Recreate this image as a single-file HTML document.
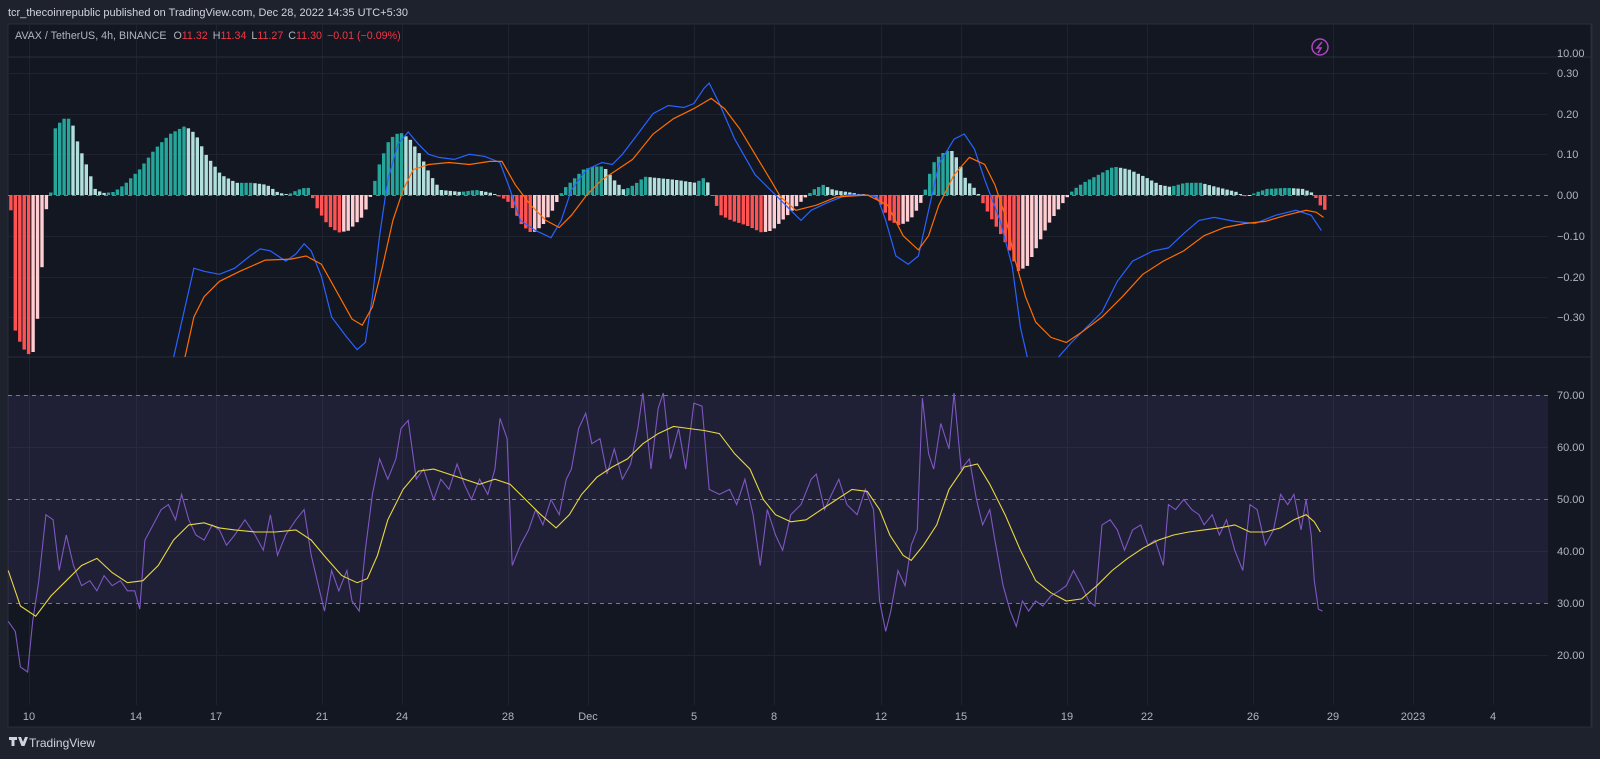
<!DOCTYPE html>
<html><head><meta charset="utf-8">
<style>
html,body{margin:0;padding:0;background:#1e222d;width:1600px;height:759px;overflow:hidden;font-family:"Liberation Sans",sans-serif;}
</style></head>
<body>
<svg id="s" width="1600" height="759" xmlns="http://www.w3.org/2000/svg" style="position:absolute;left:0;top:0">
<rect x="0" y="0" width="1600" height="759" fill="#1e222d"/>
<rect x="8" y="24" width="1584" height="703" fill="#131722" stroke="#2a2e39"/>
<text x="8" y="16" fill="#d1d4dc" font-size="11">tcr_thecoinrepublic published on TradingView.com, Dec 28, 2022 14:35 UTC+5:30</text>
<g id="grid" stroke="#1f2330" stroke-width="1"></g>
<line x1="8" y1="57" x2="1591" y2="57" stroke="#2a2e39"/>
<line x1="8" y1="357" x2="1591" y2="357" stroke="#2a2e39"/>
<line x1="1591" y1="24" x2="1591" y2="727" stroke="#2a2e39"/>
<rect x="8" y="395" width="1540" height="208" fill="#7e57c2" fill-opacity="0.12"/>
<g stroke="#787b86" stroke-dasharray="4,4" stroke-width="1">
<line x1="8" y1="195.5" x2="1548" y2="195.5"/>
<line x1="8" y1="395.5" x2="1548" y2="395.5"/>
<line x1="8" y1="499.5" x2="1548" y2="499.5"/>
<line x1="8" y1="603.5" x2="1548" y2="603.5"/>
</g>
<defs><clipPath id="cm"><rect x="8" y="58" width="1540" height="299"/></clipPath></defs>
<g id="hist" clip-path="url(#cm)"></g>
<g clip-path="url(#cm)">
<polyline id="blue" fill="none" stroke="#2962ff" stroke-width="1.2"/>
<polyline id="orange" fill="none" stroke="#ff6d00" stroke-width="1.2"/>
</g>
<polyline id="rsi" fill="none" stroke="#7e57c2" stroke-width="1.1"/>
<polyline id="rma" fill="none" stroke="#e8d844" stroke-width="1.1"/>
<g font-size="11" fill="#b2b5be" id="axis">
<text x="1557" y="57">10.00</text>
<text x="1557" y="77">0.30</text>
<text x="1557" y="118">0.20</text>
<text x="1557" y="158">0.10</text>
<text x="1557" y="199">0.00</text>
<text x="1557" y="240">−0.10</text>
<text x="1557" y="281">−0.20</text>
<text x="1557" y="321">−0.30</text>
<text x="1557" y="399">70.00</text>
<text x="1557" y="451">60.00</text>
<text x="1557" y="503">50.00</text>
<text x="1557" y="555">40.00</text>
<text x="1557" y="607">30.00</text>
<text x="1557" y="659">20.00</text>
</g>
<g font-size="11" fill="#b2b5be" text-anchor="middle" id="dates"></g>
<text x="15" y="39" font-size="10.7" fill="#b2b5be">AVAX / TetherUS, 4h, BINANCE <tspan dx="4">O</tspan><tspan fill="#f23645">11.32</tspan><tspan dx="5">H</tspan><tspan fill="#f23645">11.34</tspan><tspan dx="5">L</tspan><tspan fill="#f23645">11.27</tspan><tspan dx="5">C</tspan><tspan fill="#f23645">11.30</tspan><tspan dx="5" fill="#f23645">−0.01 (−0.09%)</tspan></text>
<circle cx="1320" cy="47" r="8" fill="none" stroke="#ab47bc" stroke-width="1.5"/>
<path d="M1322 42 L1317 48 L1321 48 L1318 53" fill="none" stroke="#ab47bc" stroke-width="1.5"/>
<g fill="#d1d4dc"><path d="M9 737 h8 v3 h-2.5 v6 h-3 v-6 h-2.5z M18 737 h3 l2 5 l2 -5 h3 l-3.5 9 h-3z"/></g>
<text x="29" y="747" font-size="12" fill="#d1d4dc">TradingView</text>
</svg>
<script>
var NS="http://www.w3.org/2000/svg",s=document.getElementById('s');
var K=1.0204;
function el(p,t,a){var e=document.createElementNS(NS,t);for(var k in a)e.setAttribute(k,a[k]);p.appendChild(e);return e;}
var g=document.getElementById('grid');
[73,114,154,236,277,317,447,551,655].forEach(function(y){el(g,'line',{x1:8,x2:1548,y1:y+.5,y2:y+.5});});
var dates=[[28,'10'],[133,'14'],[212,'17'],[316,'21'],[394,'24'],[498,'28'],[576,'Dec'],[680,'5'],[759,'8'],[863,'12'],[942,'15'],[1046,'19'],[1124,'22'],[1228,'26'],[1306,'29'],[1385,'2023'],[1463,'4']];
var dg=document.getElementById('dates');
dates.forEach(function(d){var x=Math.round(d[0]*K);el(g,'line',{x1:x+.5,x2:x+.5,y1:24,y2:705});var t=el(dg,'text',{x:x,y:720});t.textContent=d[1];});
function my(y){return 195+(y-190)*1.017;}
function ry(y){return 395+(y-387)*1.0146;}
function pts(a,f){return a.map(function(p){return (p[0]*K).toFixed(1)+','+f(p[1]).toFixed(1);}).join(' ');}
var blue=[[170,350],[190,262],[200,265],[215,268],[230,262],[245,250],[255,243],[265,245],[280,255],[290,248],[298,238],[305,245],[315,270],[325,310],[340,330],[350,342],[358,335],[365,290],[372,230],[380,175],[390,140],[400,128],[410,140],[420,150],[430,153],[445,155],[460,150],[475,152],[490,158],[500,185],[510,215],[525,225],[540,232],[550,215],[560,185],[575,165],[590,158],[600,160],[610,150],[625,130],[640,110],[655,102],[670,104],[680,100],[690,85],[695,80],[705,100],[720,135],[740,170],[755,185],[765,195],[775,205],[785,215],[795,205],[810,198],[830,190],[850,190],[860,192],[868,215],[878,250],[890,258],[900,250],[910,205],[920,160],[935,135],[945,130],[955,145],[965,175],[980,215],[992,260],[1000,320],[1008,355],[1035,352],[1050,335],[1065,320],[1080,305],[1095,275],[1110,255],[1130,245],[1145,242],[1160,228],[1175,215],[1190,212],[1210,216],[1230,218],[1250,210],[1270,205],[1285,210],[1295,225]];
var orange=[[180,355],[190,310],[200,290],[215,275],[235,265],[260,254],[285,253],[300,250],[315,258],[330,285],[345,312],[355,318],[365,300],[375,260],[385,215],[395,185],[405,165],[420,160],[440,158],[460,160],[480,157],[492,157],[505,180],[520,200],[535,215],[548,222],[560,210],[575,190],[590,175],[605,165],[620,155],[640,130],[660,115],[680,105],[697,95],[710,105],[725,125],[740,150],[755,175],[765,192],[780,205],[800,200],[820,192],[850,190],[870,200],[885,230],[900,244],[910,230],[920,200],[935,170],[950,153],[965,160],[975,180],[985,210],[995,255],[1005,290],[1015,315],[1030,330],[1045,335],[1060,325],[1080,310],[1100,290],[1120,268],[1140,255],[1160,245],[1180,230],[1200,222],[1220,218],[1240,216],[1260,210],[1280,205],[1290,207],[1297,212]];
document.getElementById('blue').setAttribute('points',pts(blue,my));
document.getElementById('orange').setAttribute('points',pts(orange,my));
var hc=[[10,-125],[20,-150],[30,-160],[38,-100],[42,-20],[48,0],[52,65],[60,75],[68,75],[75,50],[85,25],[92,5],[100,2],[110,3],[120,10],[135,25],[150,45],[165,60],[180,68],[190,60],[200,40],[215,20],[230,12],[245,12],[260,10],[270,3],[280,0],[290,5],[300,8],[310,-15],[320,-30],[330,-37],[340,-35],[355,-20],[362,0],[370,30],[380,55],[390,62],[400,55],[410,40],[420,20],[430,5],[450,3],[465,5],[480,2],[495,-5],[502,-15],[510,-30],[520,-38],[530,-30],[540,-15],[550,5],[560,15],[570,25],[580,28],[590,28],[600,15],[610,5],[620,10],[630,18],[640,17],[660,15],[680,12],[690,18],[698,-5],[705,-20],[715,-25],[730,-30],[745,-37],[755,-35],[765,-25],[775,-15],[785,-5],[795,5],[805,10],[815,5],[835,2],[855,-2],[862,-10],[870,-25],[880,-30],[890,-25],[900,-10],[905,5],[912,30],[920,40],[930,45],[937,35],[945,15],[955,5],[960,-5],[968,-20],[980,-40],[988,-55],[996,-75],[1005,-70],[1015,-50],[1025,-30],[1035,-15],[1042,-5],[1050,5],[1060,12],[1075,20],[1090,28],[1105,25],[1120,18],[1135,10],[1145,8],[1160,12],[1175,12],[1190,8],[1210,3],[1220,-2],[1228,2],[1240,6],[1260,7],[1275,6],[1285,2],[1292,-10],[1297,-15]];
function interp(a,x){for(var i=0;i<a.length-1;i++){if(x>=a[i][0]&&x<=a[i+1][0]){var t=(x-a[i][0])/(a[i+1][0]-a[i][0]);return a[i][1]+t*(a[i+1][1]-a[i][1]);}}return a[a.length-1][1];}
var hg=document.getElementById('hist'),prev=null,z=195;
for(var x=9;x<=1297;x+=4.35){var v=interp(hc,x)*1.017;var c;
if(v>=0)c=(prev===null||v>=prev)?'#26a69a':'#b2dfdb';else c=(prev===null||v<=prev)?'#ff5252':'#ffcdd2';
prev=v;var h=Math.abs(v);if(h<1)h=1;el(hg,'rect',{x:(x*K).toFixed(1),y:(v>=0?z-h:z).toFixed(1),width:3.4,height:h.toFixed(1),fill:c});}
var rsi=[[8,610],[15,620],[20,655],[27,660],[32,610],[38,570],[45,505],[52,510],[58,560],[65,525],[72,555],[80,575],[88,570],[95,580],[102,565],[110,575],[118,570],[125,580],[132,580],[137,598],[142,530],[150,515],[158,500],[165,495],[172,510],[178,485],[185,510],[192,525],[200,530],[208,515],[215,520],[222,535],[230,525],[240,510],[250,525],[258,540],[265,505],[272,545],[280,525],[290,510],[298,500],[305,545],[312,575],[318,600],[325,560],[332,580],[340,560],[345,590],[352,600],[358,540],[365,485],[372,450],[380,470],[388,450],[393,420],[400,412],[408,470],[415,460],[425,490],[432,470],[440,480],[448,455],[455,475],[462,490],[470,470],[478,485],[485,460],[490,410],[497,430],[502,555],[510,535],[518,520],[525,500],[532,515],[540,490],[548,505],[555,470],[560,460],[567,420],[574,405],[580,435],[588,430],[595,465],[602,440],[610,470],[618,455],[625,420],[630,385],[638,460],[645,400],[650,385],[657,450],[665,420],[672,460],[680,395],[688,398],[695,480],[705,485],[715,480],[722,495],[730,470],[738,505],[745,555],[752,500],[760,525],[767,540],[775,505],[785,495],[795,470],[800,465],[808,500],[815,485],[822,470],[830,495],[840,505],[848,480],[856,500],[862,590],[868,620],[873,600],[880,560],[887,575],[893,535],[899,520],[904,390],[910,445],[915,460],[922,415],[930,440],[935,385],[942,460],[950,450],[957,490],[963,515],[970,500],[975,530],[983,575],[990,600],[996,615],[1002,590],[1008,600],[1015,590],[1022,595],[1030,585],[1038,580],[1045,575],[1052,560],[1060,575],[1067,590],[1073,595],[1080,515],[1088,510],[1095,520],[1102,540],[1110,520],[1118,515],[1125,535],[1132,530],[1140,555],[1145,495],[1152,500],[1160,490],[1168,500],[1175,505],[1180,515],[1188,505],[1195,525],[1202,510],[1210,540],[1218,560],[1225,495],[1232,500],[1240,535],[1248,520],[1255,485],[1262,495],[1268,485],[1275,520],[1280,490],[1285,525],[1288,570],[1292,598],[1296,600]];
var rma=[[8,560],[20,595],[35,605],[50,585],[65,570],[80,555],[95,548],[110,562],[125,572],[140,570],[155,555],[170,530],[185,515],[200,513],[215,518],[230,520],[250,522],[270,522],[290,520],[305,530],[320,548],[335,565],[350,572],[360,568],[370,545],[380,510],[395,480],[410,462],[425,460],[440,465],[455,470],[470,475],[485,470],[500,475],[515,490],[530,505],[545,518],[558,505],[570,485],[585,468],[600,458],[615,450],[630,435],[645,425],[660,418],[675,420],[690,422],[705,425],[720,445],[735,460],[748,490],[760,505],[775,512],[790,510],[805,500],[820,490],[835,480],[850,482],[862,500],[872,525],[885,545],[893,550],[905,535],[918,515],[930,480],[945,458],[958,455],[970,475],[985,505],[1000,540],[1015,570],[1030,582],[1045,590],[1060,588],[1075,575],[1090,560],[1105,548],[1120,538],[1135,530],[1150,525],[1165,522],[1180,520],[1195,518],[1210,515],[1225,522],[1240,522],[1255,518],[1268,510],[1280,505],[1288,512],[1294,522]];
document.getElementById('rsi').setAttribute('points',pts(rsi,ry));
document.getElementById('rma').setAttribute('points',pts(rma,ry));
</script>
</body></html>
